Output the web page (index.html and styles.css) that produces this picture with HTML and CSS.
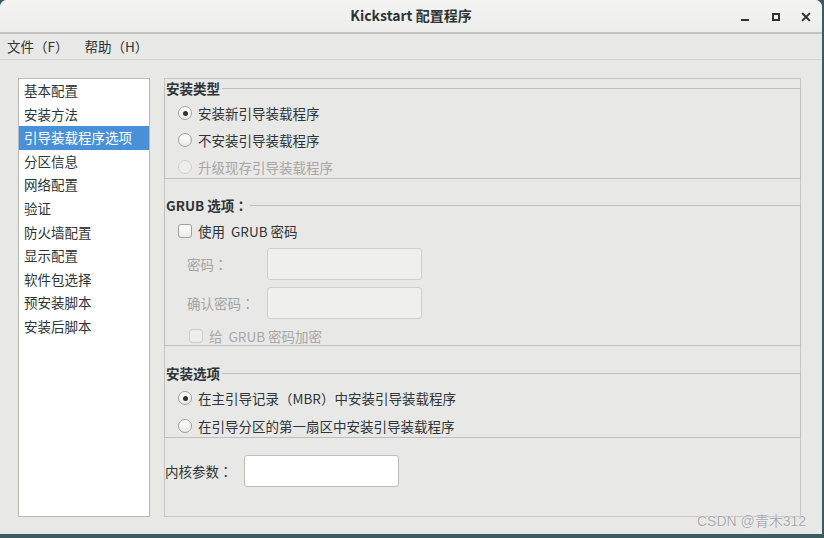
FILE: index.html
```html
<!DOCTYPE html>
<html lang="zh-CN">
<head>
<meta charset="utf-8">
<title>Kickstart 配置程序</title>
<link rel="stylesheet" href="styles.css">
</head>
<body>
<div class="window">
  <header class="titlebar">
    <div class="title">Kickstart 配置程序</div>
    <div class="controls">
      <svg class="ctl" width="16" height="16" viewBox="0 0 16 16"><rect x="4" y="10" width="8" height="2" fill="#2e3436"/></svg>
      <svg class="ctl" width="16" height="16" viewBox="0 0 16 16"><rect x="5" y="5" width="6" height="6" fill="none" stroke="#2e3436" stroke-width="2"/></svg>
      <svg class="ctl" width="16" height="16" viewBox="0 0 16 16"><path d="M4.8 4.8 L11.2 11.2 M11.2 4.8 L4.8 11.2" stroke="#2e3436" stroke-width="2" stroke-linecap="square"/></svg>
    </div>
  </header>
  <nav class="menubar">
    <span class="menu-item">文件（F）</span>
    <span class="menu-item">帮助（H）</span>
  </nav>
  <main class="content">
    <ul class="sidebar">
      <li>基本配置</li>
      <li>安装方法</li>
      <li class="selected">引导装载程序选项</li>
      <li>分区信息</li>
      <li>网络配置</li>
      <li>验证</li>
      <li>防火墙配置</li>
      <li>显示配置</li>
      <li>软件包选择</li>
      <li>预安装脚本</li>
      <li>安装后脚本</li>
    </ul>
    <section class="panel">
      <fieldset class="frame frame-type">
        <legend>安装类型</legend>
        <div class="frame-body opts">
          <div class="opt"><span class="radio checked"></span>安装新引导装载程序</div>
          <div class="opt"><span class="radio"></span>不安装引导装载程序</div>
          <div class="opt disabled"><span class="radio"></span>升级现存引导装载程序</div>
        </div>
      </fieldset>
      <fieldset class="frame frame-grub">
        <legend>GRUB 选项<span class="colon" lang="ja">：</span></legend>
        <div class="frame-body grub-body">
          <div class="opt"><span class="check"></span>使用&nbsp; GRUB 密码</div>
          <div class="pw-row pw-first"><span class="pw-label">密码<span class="colon" lang="ja">：</span></span><input class="entry" type="password" disabled></div>
          <div class="pw-row pw-second"><span class="pw-label">确认密码<span class="colon" lang="ja">：</span></span><input class="entry" type="password" disabled></div>
          <div class="opt disabled encrypt"><span class="check"></span>给&nbsp; GRUB 密码加密</div>
        </div>
      </fieldset>
      <fieldset class="frame frame-opts">
        <legend>安装选项</legend>
        <div class="frame-body opts opts-wide">
          <div class="opt"><span class="radio checked"></span>在主引导记录（MBR）中安装引导装载程序</div>
          <div class="opt"><span class="radio"></span>在引导分区的第一扇区中安装引导装载程序</div>
        </div>
      </fieldset>
      <div class="kernel-row">
        <span class="kernel-label">内核参数<span class="colon" lang="ja">：</span></span>
        <input class="entry entry-active" type="text">
      </div>
    </section>
  </main>
</div>
<div class="watermark">CSDN @青木312</div>
</body>
</html>
```
FILE: styles.css
```css
* { box-sizing: border-box; }
html, body { margin: 0; padding: 0; }
body {
  width: 824px;
  height: 538px;
  overflow: hidden;
  position: relative;
  background: #3a5c61;
  font-family: "Noto Sans CJK SC", "Noto Sans", sans-serif;
  font-size: 13.5px;
  color: #2e3436;
}
.colon { font-family: "Noto Sans CJK JP", "Noto Sans CJK SC", sans-serif; }
.window {
  width: 822px;
  height: 534px;
  background: #e8e8e7;
  border-radius: 7px 7px 0 0;
  overflow: hidden;
  display: flex;
  flex-direction: column;
}
.titlebar {
  height: 34px;
  flex: none;
  background: linear-gradient(#f4f4f3, #ededec);
  border-bottom: 2px solid #c3c3c0;
  display: grid;
  grid-template-columns: 1fr auto 1fr;
  align-items: center;
}
.title {
  grid-column: 2;
  font-weight: bold;
  font-size: 14px;
  line-height: 18px;
  padding-bottom: 2px;
}
.controls {
  grid-column: 3;
  justify-self: end;
  display: flex;
  align-items: center;
  gap: 14.5px;
  padding-right: 8px;
  padding-top: 1px;
}
.ctl { display: block; }
.menubar {
  height: 26px;
  flex: none;
  border-bottom: 1px solid #d3d3d0;
  display: flex;
  align-items: center;
  padding-left: 4px;
  padding-bottom: 1px;
  gap: 10px;
}
.menu-item { line-height: 18px; padding: 0 3px; }
.content {
  flex: 1;
  display: flex;
  gap: 14px;
  padding: 18px 21px 17px 18px;
}
.sidebar {
  width: 132px;
  height: 439px;
  margin: 0;
  padding: 0;
  list-style: none;
  background: #ffffff;
  border: 1px solid #b9b9b6;
}
.sidebar li {
  height: 23.6px;
  line-height: 22.6px;
  padding-left: 5px;
  padding-bottom: 1px;
  white-space: nowrap;
}
.sidebar li.selected { background: #4a90d9; color: #ffffff; }
.panel {
  width: 637px;
  height: 439px;
  border: 1px solid #c6c6c3;
  display: flex;
  flex-direction: column;
}
.frame {
  margin: 0 -1px;
  padding: 0;
  min-width: 0;
  border: 1px solid #bfbfbc;
}
.frame legend {
  padding: 0 2px 0 1px;
  margin: 0;
  font-weight: bold;
  font-size: 13.5px;
  line-height: 18px;
}
.frame-grub { margin-top: 17px; }
.frame-opts { margin-top: 18px; }
.opts {
  display: flex;
  flex-direction: column;
  gap: 5px;
  padding: 5px 0 0 13px;
}
.opts-wide { gap: 6px; }
.opt {
  height: 22px;
  display: flex;
  align-items: center;
  gap: 6px;
  white-space: nowrap;
  line-height: 20px;
}
.opt.disabled { color: #a7a7a5; }
.radio {
  width: 14px;
  height: 14px;
  flex: none;
  border-radius: 50%;
  border: 1px solid #a0a09d;
  background: linear-gradient(#ffffff, #eaeae9);
  position: relative;
}
.radio.checked::after {
  content: "";
  position: absolute;
  left: 3.5px;
  top: 3.5px;
  width: 5px;
  height: 5px;
  border-radius: 50%;
  background: #2e3436;
}
.opt.disabled .radio { border-color: #cfcfcc; background: #ededec; }
.check {
  width: 14px;
  height: 14px;
  flex: none;
  border-radius: 3px;
  border: 1px solid #a0a09d;
  background: linear-gradient(#ffffff, #eaeae9);
}
.opt.disabled .check { border-color: #cfcfcc; background: #ededec; }
.grub-body {
  display: flex;
  flex-direction: column;
  padding: 6px 0 0 13px;
}
.pw-row {
  display: flex;
  align-items: center;
  padding-left: 9px;
  height: 32px;
}
.pw-first { margin-top: 6px; }
.pw-second { margin-top: 7px; }
.pw-label { width: 80px; color: #a4a4a2; white-space: nowrap; }
.encrypt { margin-top: 8px; height: 18px; padding-left: 11px; }
.entry {
  width: 155px;
  height: 32px;
  margin: 0;
  padding: 0 6px;
  border: 1px solid #cfcfcc;
  border-radius: 3px;
  background: #efefee;
  font: inherit;
  outline: none;
}
.entry-active { background: #ffffff; border-color: #bdbdba; }
.kernel-row {
  margin-top: 17px;
  display: flex;
  align-items: center;
  height: 32px;
}
.kernel-label { width: 79px; white-space: nowrap; color: #2e3436; }
.watermark {
  position: absolute;
  left: 697px;
  top: 512px;
  font-family: "Liberation Sans", Arial, sans-serif;
  font-size: 14px;
  line-height: 18px;
  color: #a9a9a9;
  text-shadow: 0 0 1px #ffffff, 0 0 1px #ffffff;
  white-space: nowrap;
}
```
